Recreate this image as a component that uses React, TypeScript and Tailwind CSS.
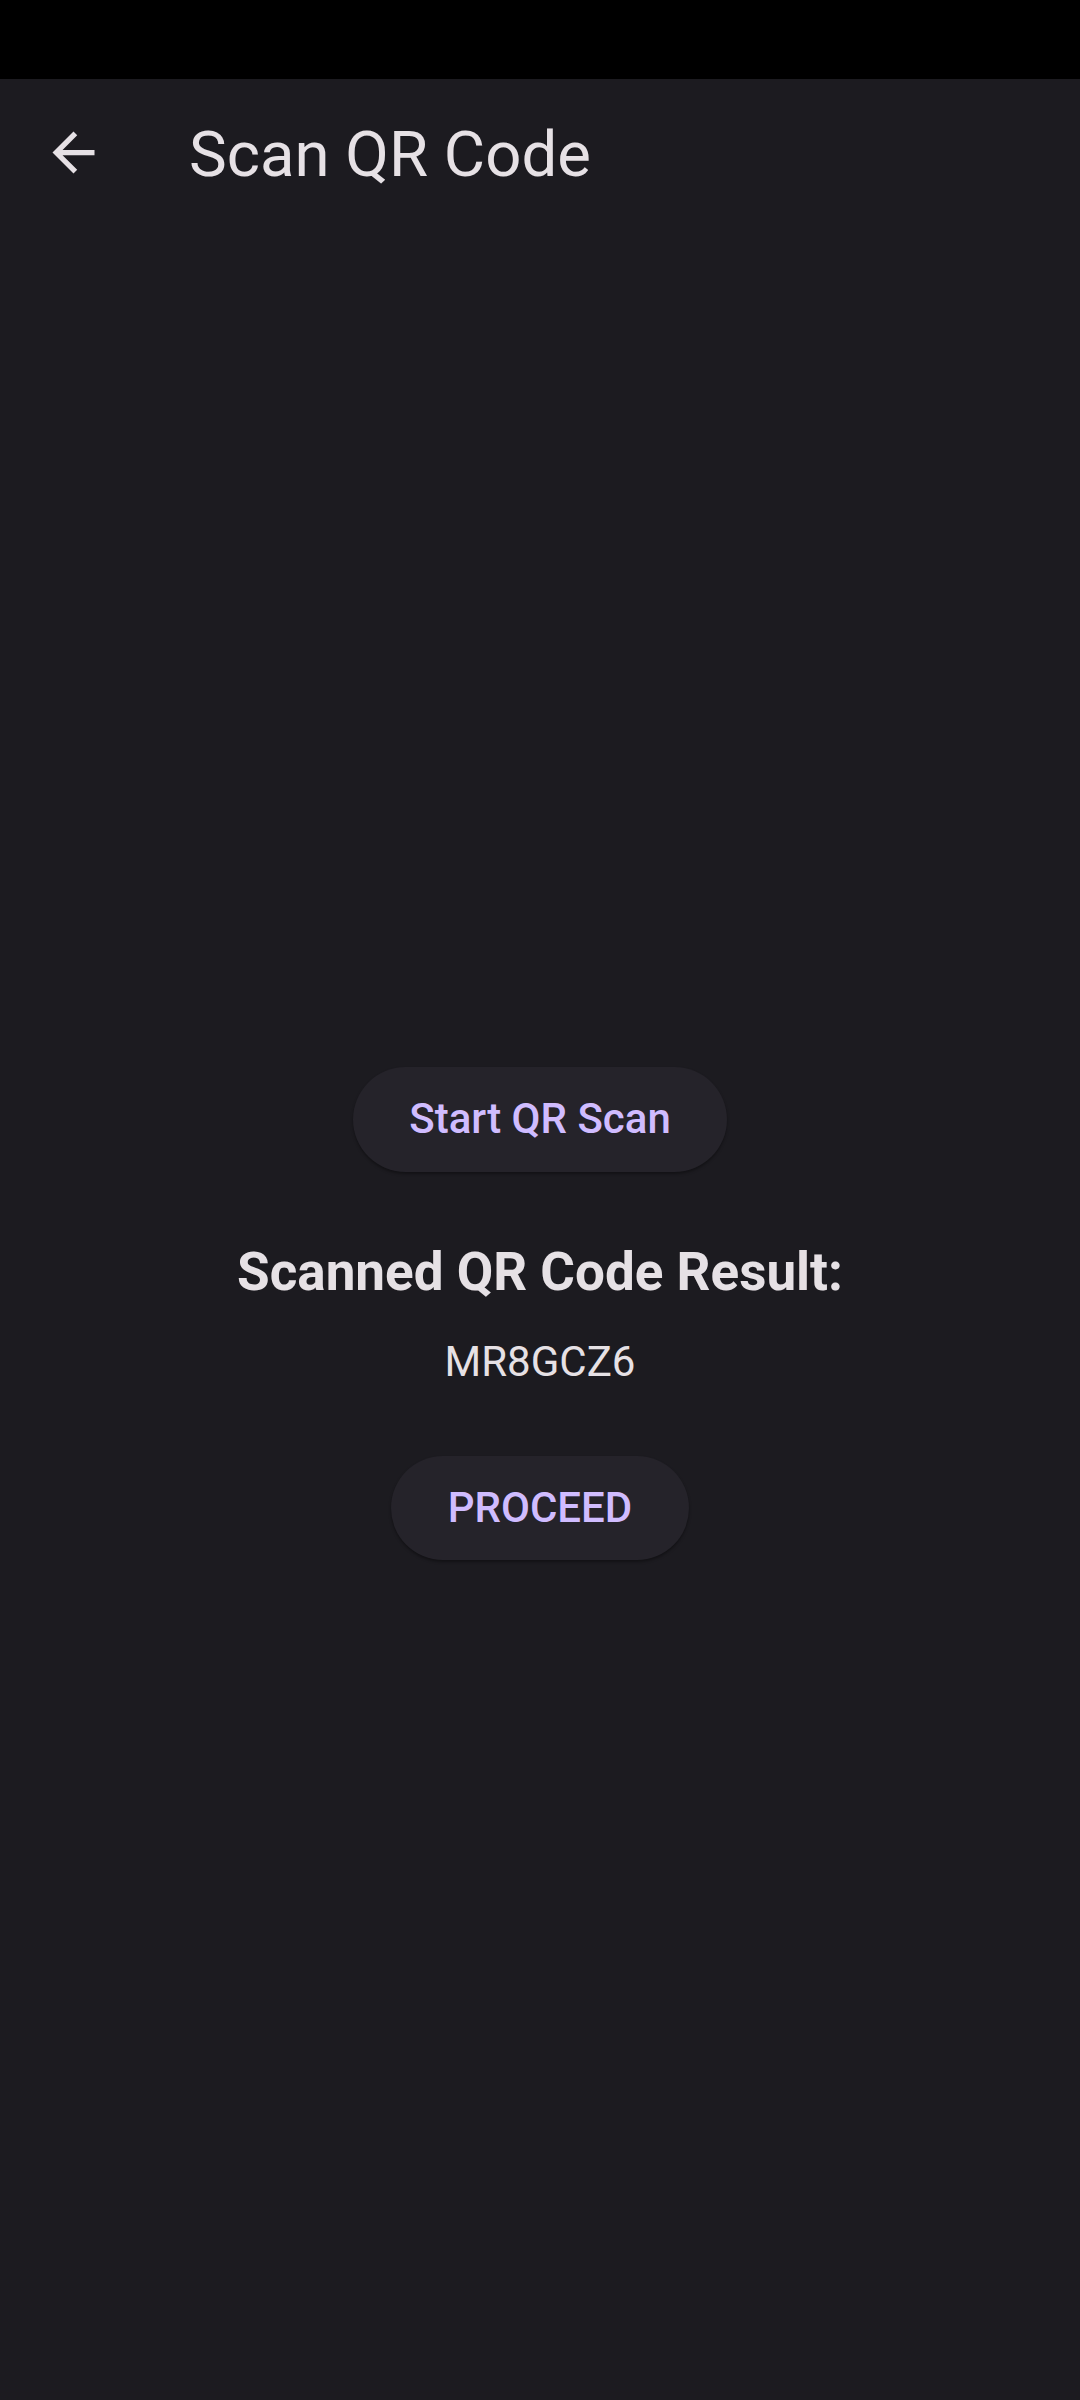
const roboto = { fontFamily: 'Roboto, "Noto Sans", sans-serif' };

function BackArrow() {
  return (
    <svg viewBox="0 0 24 24" className="h-[63px] w-[63px]" fill="#e6e1e5">
      <path d="M20 11H7.83l5.59-5.59L12 4l-8 8 8 8 1.41-1.41L7.83 13H20v-2z" />
    </svg>
  );
}

export default function App() {
  return (
    <div className="flex h-screen w-full flex-col bg-[#1c1b20] text-[#e6e1e5]" style={roboto}>
      {/* status bar */}
      <div className="h-[79px] w-full bg-black" />

      {/* app bar */}
      <div className="flex h-[147px] items-center">
        <button className="flex h-[147px] w-[147px] items-center justify-center">
          <BackArrow />
        </button>
        <h1 className="ml-[42px] mt-[3px] text-[63.5px] font-normal leading-[63px]">Scan QR Code</h1>
      </div>

      {/* body */}
      <div className="flex flex-1 flex-col items-center justify-center">
        <button className="flex h-[105px] items-center justify-center rounded-full bg-[#25232a] px-[56px] text-[42px] font-medium leading-[50px] text-[#d0bcff] shadow-[0_2px_3px_rgba(0,0,0,0.35)]">
          Start QR Scan
        </button>
        <h2 className="mt-[69px] text-[53px] font-bold leading-[62px]">Scanned QR Code Result:</h2>
        <p className="mt-[34px] text-[42px] font-normal leading-[50px]">MR8GCZ6</p>
        <button className="mt-[69px] flex h-[104px] items-center justify-center rounded-full bg-[#25232a] px-[57px] text-[42px] font-medium leading-[50px] text-[#d0bcff] shadow-[0_2px_3px_rgba(0,0,0,0.35)]">
          PROCEED
        </button>
      </div>
    </div>
  );
}
